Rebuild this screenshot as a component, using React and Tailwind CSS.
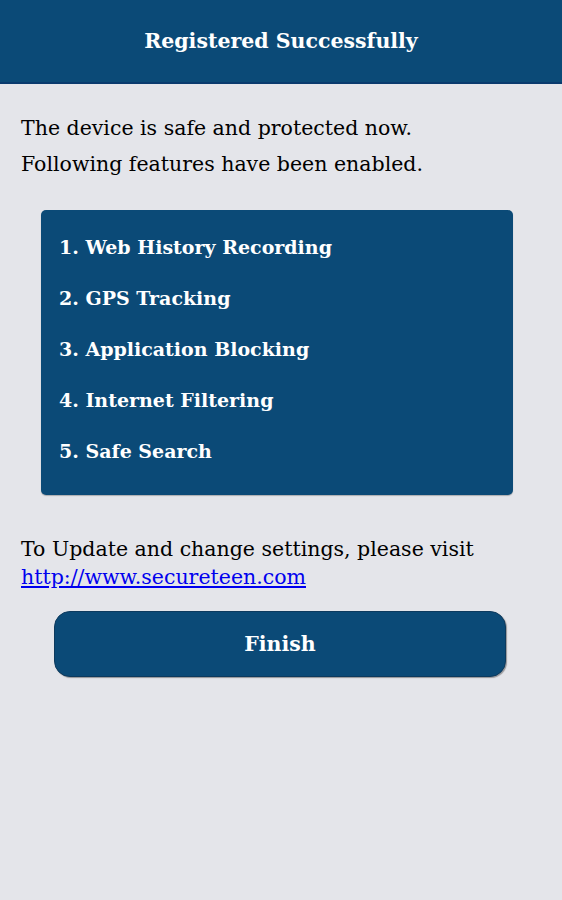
export default function App() {
  const features = [
    '1. Web History Recording',
    '2. GPS Tracking',
    '3. Application Blocking',
    '4. Internet Filtering',
    '5. Safe Search',
  ];

  return (
    <div className="min-h-[900px] bg-[#e4e5ea] font-['DejaVu_Serif',serif] text-black">
      <header className="h-[84px] flex items-center justify-center bg-[#0b4a77] border-b-2 border-[#0a3a6e]">
        <h1 className="text-[20.5px] font-bold text-white">Registered Successfully</h1>
      </header>

      <div className="pt-[26px] px-[21px] text-[20.5px] leading-[36px]">
        <p>The device is safe and protected now.</p>
        <p>Following features have been enabled.</p>
      </div>

      <div className="mt-[28px] mx-[41px] w-[472px] rounded-[5px] bg-[#0b4a77] pt-[12px] pb-[18px] pl-[18px] shadow-[0_1px_1px_rgba(0,0,0,0.25)]">
        {features.map((f) => (
          <div key={f} className="text-[19px] leading-[51px] font-bold text-white">
            {f}
          </div>
        ))}
      </div>

      <div className="mt-[40px] px-[21px] text-[20.5px] leading-[28px]">
        <p>To Update and change settings, please visit</p>
        <a href="#" className="text-[#0000ee] underline">http://www.secureteen.com</a>
      </div>

      <div className="mt-[20px] px-[54px]">
        <button className="w-[452px] h-[66px] rounded-[16px] bg-[#0b4a77] border border-[#0d3a5e] shadow-[1px_1px_1px_rgba(0,0,0,0.35)] text-white font-bold text-[20.5px]">
          Finish
        </button>
      </div>
    </div>
  );
}
